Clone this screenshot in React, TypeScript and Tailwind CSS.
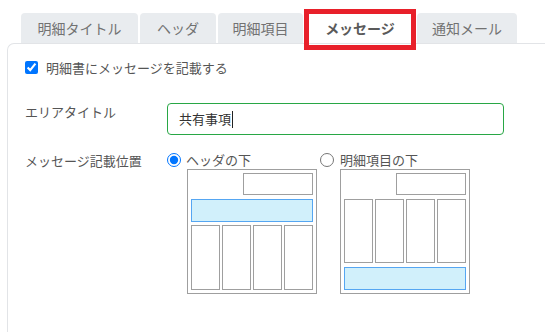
const tabs = [
  { label: "明細タイトル", width: "w-[117px]" },
  { label: "ヘッダ", width: "w-[76px]" },
  { label: "明細項目", width: "w-[85px]" },
  { label: "メッセージ", width: "w-[110px]", active: true },
  { label: "通知メール", width: "w-[100px]" },
];

function Columns({ className }: { className: string }) {
  return (
    <div className={`grid grid-cols-4 gap-[2px] ${className}`}>
      {[0, 1, 2, 3].map((i) => (
        <div key={i} className="border border-[#9f9f9f] bg-white" />
      ))}
    </div>
  );
}

function Layout({ messageBelow }: { messageBelow?: boolean }) {
  const bar = <div className="h-[23px] border border-[#55a6f2] bg-[#d1f0fb]" />;
  return (
    <div className="flex h-[125px] w-[130px] flex-col border border-[#9f9f9f] p-[3px]">
      <div className="ml-auto h-[22px] w-[70px] border border-[#9f9f9f]" />
      {messageBelow ? (
        <>
          <Columns className="mt-[4px] h-[65px]" />
          <div className="mt-[4px]">{bar}</div>
        </>
      ) : (
        <>
          <div className="mt-[4px]">{bar}</div>
          <Columns className="mt-[3px] h-[65px]" />
        </>
      )}
    </div>
  );
}

export default function App() {
  return (
    <div className="h-[332px] w-[545px] overflow-hidden bg-white font-['Noto_Sans_CJK_JP',sans-serif] text-[#555]">
      {/* タブ */}
      <div className="relative z-10 flex gap-[2px] pl-[21px] pt-[13px]">
        {tabs.map((tab) => (
          <div
            key={tab.label}
            className={`relative flex h-[30px] items-center justify-center rounded-t-[4px] text-[14px] ${tab.width} ${
              tab.active ? "bg-white font-bold text-[#5a5a5a]" : "bg-[#e9ecef] text-[#727272]"
            }`}
          >
            {tab.label}
            {tab.active && (
              <div className="pointer-events-none absolute -bottom-[7px] -left-[1px] -right-[1px] -top-[4px] border-[5px] border-[#e8202a]" />
            )}
          </div>
        ))}
      </div>

      {/* パネル */}
      <div className="ml-[7px] h-[289px] rounded-tl-[7px] border-l border-t border-[#e2e4e7] pl-[17px] pt-[17px] text-[13px]">
        <label className="flex h-[13px] items-center gap-[8px]">
          <input type="checkbox" defaultChecked className="m-0 h-[13px] w-[13px]" />
          <span className="leading-[13px]">明細書にメッセージを記載する</span>
        </label>

        <div className="mt-[29px] flex">
          <div className="w-[142px] leading-[18px]">エリアタイトル</div>
          <div className="flex h-[32px] w-[337px] items-center rounded-[4px] border border-[#28a745] px-[11px] text-[#333]">
            共有事項
            <span className="ml-[1px] h-[17px] w-px bg-[#222]" />
          </div>
        </div>

        <div className="mt-[16px] flex">
          <div className="w-[142px] leading-[20px]">メッセージ記載位置</div>
          <div className="flex gap-[3px]">
            <div>
              <label className="flex h-[18px] items-center gap-[5px]">
                <input type="radio" name="pos" defaultChecked className="m-0 h-[14px] w-[14px]" />
                <span>ヘッダの下</span>
              </label>
              <div className="ml-[20px]">
                <Layout />
              </div>
            </div>
            <div>
              <label className="flex h-[18px] items-center gap-[6px]">
                <input type="radio" name="pos" className="m-0 h-[14px] w-[14px]" />
                <span>明細項目の下</span>
              </label>
              <div className="ml-[20px]">
                <Layout messageBelow />
              </div>
            </div>
          </div>
        </div>
      </div>
    </div>
  );
}
